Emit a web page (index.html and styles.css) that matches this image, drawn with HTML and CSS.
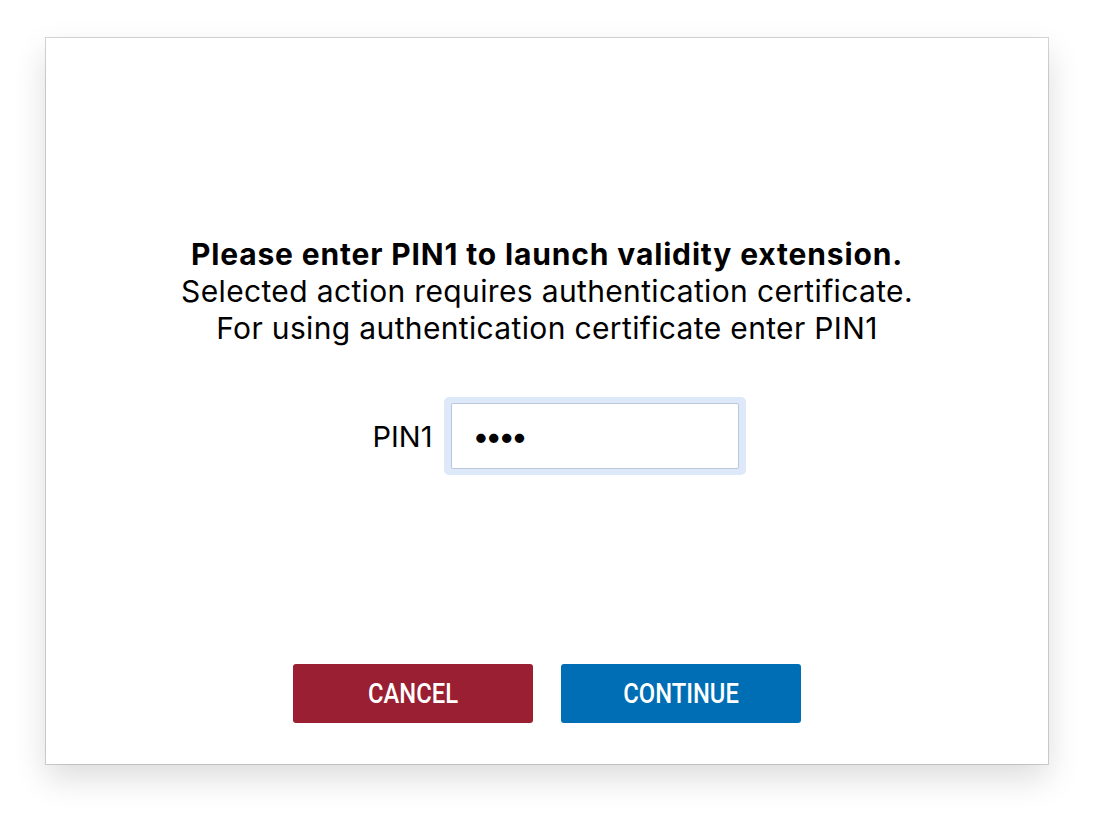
FILE: index.html
```html
<!DOCTYPE html>
<html>
<head>
<meta charset="utf-8">
<link rel="stylesheet" href="styles.css">
</head>
<body>
<div class="window">
  <div class="content">
    <div class="message">
      <div class="title">Please enter PIN1 to launch validity extension.</div>
      <div class="line">Selected action requires authentication certificate.</div>
      <div class="line">For using authentication certificate enter PIN1</div>
    </div>
    <div class="pin-row">
      <label class="pin-label" for="pin">PIN1</label>
      <div class="pin-ring">
        <input id="pin" class="pin-input" type="password" value="1234">
      </div>
    </div>
  </div>
  <div class="actions">
    <button class="btn btn-cancel"><span class="btn-text">CANCEL</span></button>
    <button class="btn btn-continue"><span class="btn-text">CONTINUE</span></button>
  </div>
</div>
</body>
</html>
```
FILE: styles.css
```css
html, body {
  margin: 0;
  padding: 0;
  background: #ffffff;
}
body {
  padding: 38px 46px 0 46px;
  min-height: 818px;
  box-sizing: border-box;
  font-family: Inter, "Liberation Sans", sans-serif;
}
.window {
  width: 1002px;
  height: 726px;
  box-sizing: border-box;
  background: #fff;
  box-shadow: 0 0 0 1px rgba(0,0,0,0.16), 0 14px 32px rgba(0,0,0,0.14);
  display: flex;
  flex-direction: column;
  align-items: center;
}
.content {
  flex: 1;
  display: flex;
  flex-direction: column;
  align-items: center;
  padding-top: 198px;
}
.message {
  text-align: center;
  color: #000;
  font-size: 30px;
  line-height: 37px;
  letter-spacing: 0.35px;
}
.title {
  font-weight: 700;
  letter-spacing: 0.85px;
}
.pin-row {
  margin-top: 50px;
  margin-left: 25px;
  display: flex;
  align-items: center;
  gap: 12px;
}
.pin-label {
  font-size: 29px;
  color: #000;
}
.pin-ring {
  padding: 6px 7px;
  background: #dde8f8;
  border-radius: 5px;
}
.pin-input {
  display: block;
  width: 288px;
  height: 66px;
  box-sizing: border-box;
  border: 1px solid #b8c8dc;
  border-radius: 2px;
  padding: 0 0 0 20px;
  font-family: Inter, "Liberation Sans", sans-serif;
  font-size: 30px;
  letter-spacing: -4px;
  color: #000;
  background: #fff;
  outline: none;
}
.actions {
  display: flex;
  gap: 28px;
  padding-bottom: 41px;
}
.btn {
  width: 240px;
  height: 59px;
  border: none;
  border-radius: 3px;
  color: #fff;
  font-family: Roboto, "Liberation Sans", sans-serif;
  font-size: 28px;
  font-weight: 500;
  cursor: pointer;
  padding: 0;
}
.btn-text {
  display: inline-block;
  transform: scaleX(0.85);
}
.btn-cancel {
  background: #9a1f32;
}
.btn-continue {
  background: #006eb5;
}
```
